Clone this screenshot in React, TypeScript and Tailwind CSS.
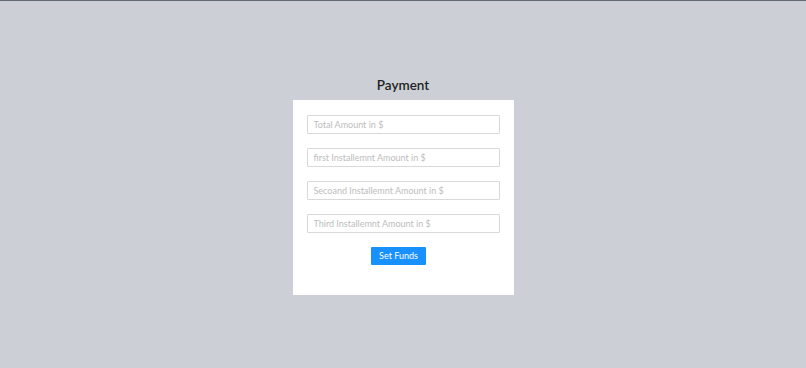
import React from "react";

const fields = [
  "Total Amount in $",
  "first Installemnt Amount in $",
  "Secoand Installemnt Amount in $",
  "Third Installemnt Amount in $",
];

const App = () => {
  return (
    <div
      className="h-screen w-full bg-[#ccd0d6] border-t border-[#5f6873] flex flex-col items-center justify-center"
      style={{ fontFamily: 'Lato, "Noto Sans", sans-serif' }}
    >
      <h2 className="text-[13.5px] leading-[18px] font-semibold text-[#1f1f1f] mb-[6px] pt-[2px]">
        Payment
      </h2>
      <div className="w-[221px] bg-white px-[14px] pt-[15px] pb-[30px] flex flex-col">
        {fields.map((f) => (
          <input
            key={f}
            placeholder={f}
            className="h-[19px] w-full border border-[#d9d9d9] rounded-[1px] px-[6px] text-[9px] mb-[14px] outline-none placeholder:text-[#bdbdbd]"
          />
        ))}
        <button className="self-center mr-[9px] h-[18px] w-[55px] bg-[#1890ff] text-white text-[9px] rounded-[1px]">
          Set Funds
        </button>
      </div>
    </div>
  );
};

export default App;
